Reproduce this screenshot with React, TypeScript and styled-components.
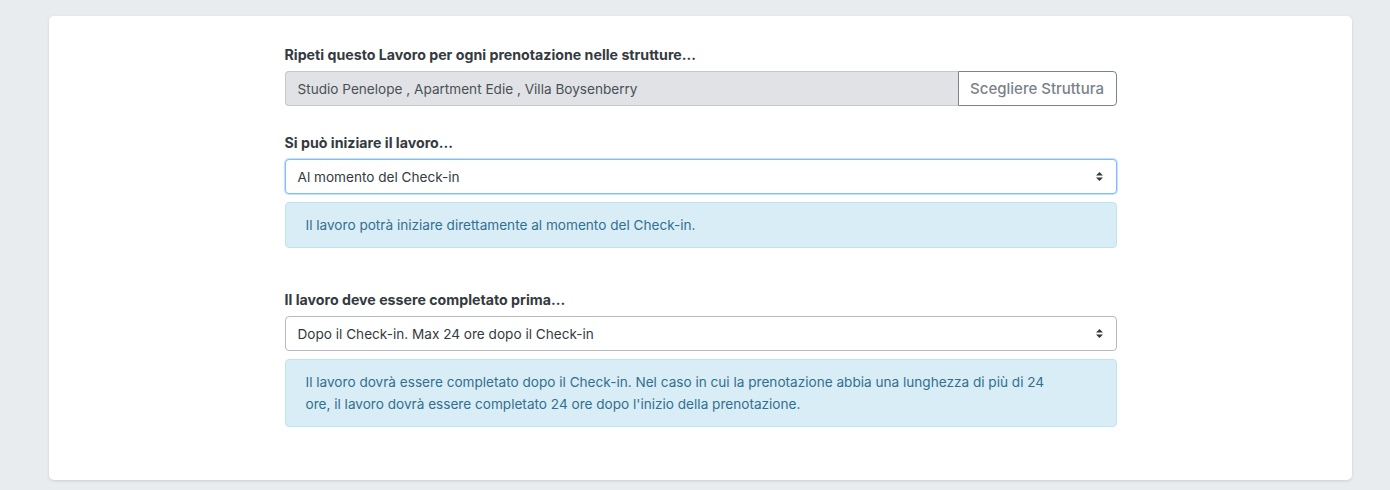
import React from "react";
import styled, { createGlobalStyle } from "styled-components";

const GlobalStyle = createGlobalStyle`
  * { box-sizing: border-box; }
  body {
    margin: 0;
    background: #e9ecef;
    font-family: Inter, "Noto Sans", "Liberation Sans", sans-serif;
    font-size: 14px;
    color: #495057;
  }
`;

const Page = styled.div`
  padding: 16px 38px 12px 49px;
`;

const Card = styled.div`
  background: #fff;
  border-radius: 5px;
  box-shadow: 0 1px 3px rgba(0, 0, 0, 0.12);
  padding: 28px 20px 53px;
`;

const Column = styled.div`
  max-width: 832px;
  margin: 0 auto;
`;

const Group = styled.div<{ $gap: number }>`
  margin-bottom: ${(p) => p.$gap}px;
`;

const Label = styled.div`
  font-weight: 700;
  color: #343a40;
  line-height: 21px;
  margin-bottom: 6px;
  font-size: 14.2px;
`;

const InputGroup = styled.div`
  display: flex;
  height: 35px;
`;

const ReadonlyInput = styled.div`
  flex: 1;
  background: #e0e2e5;
  border: 1px solid #c4c8cc;
  border-right: none;
  border-radius: 4px 0 0 4px;
  padding: 0 12px;
  display: flex;
  align-items: center;
  font-size: 13.6px;
  color: #495057;
`;

const OutlineButton = styled.button`
  flex: none;
  border: 1px solid #7b848c;
  background: #fff;
  color: #7a828a;
  border-radius: 0 4px 4px 0;
  padding: 0;
  font-family: inherit;
  font-size: 15px;
  font-weight: 500;
  white-space: nowrap;
  width: 159px;
`;

const Select = styled.div<{ $focus?: boolean }>`
  height: 35px;
  border: 1px solid ${(p) => (p.$focus ? "#80bdff" : "#b5babe")};
  box-shadow: ${(p) => (p.$focus ? "0 0 0 1px rgba(128,189,255,0.45)" : "none")};
  border-radius: 4px;
  background: #fff;
  padding: 0 12px;
  display: flex;
  align-items: center;
  justify-content: space-between;
  font-size: 13.6px;
  color: #343a40;
`;

const Alert = styled.div`
  margin-top: 8px;
  background: #d9edf6;
  border: 1px solid #bfe4ee;
  border-radius: 4px;
  padding: 11px 20px;
  line-height: 22px;
  color: #31708f;
  font-size: 13.6px;
`;

function Caret() {
  return (
    <svg width="9" height="11" viewBox="0 0 9 11">
      <path d="M4.5 1 L8 4.5 H1 Z M4.5 10 L8 6.5 H1 Z" fill="#343a40" />
    </svg>
  );
}

export default function App() {
  return (
    <>
      <GlobalStyle />
      <Page>
        <Card>
          <Column>
            <Group $gap={26}>
              <Label>Ripeti questo Lavoro per ogni prenotazione nelle strutture...</Label>
              <InputGroup>
                <ReadonlyInput>Studio Penelope , Apartment Edie , Villa Boysenberry</ReadonlyInput>
                <OutlineButton>Scegliere Struttura</OutlineButton>
              </InputGroup>
            </Group>
            <Group $gap={41}>
              <Label>Si può iniziare il lavoro...</Label>
              <Select $focus>
                <span>Al momento del Check-in</span>
                <Caret />
              </Select>
              <Alert>Il lavoro potrà iniziare direttamente al momento del Check-in.</Alert>
            </Group>
            <Group $gap={0}>
              <Label>Il lavoro deve essere completato prima...</Label>
              <Select>
                <span>Dopo il Check-in. Max 24 ore dopo il Check-in</span>
                <Caret />
              </Select>
              <Alert>
                Il lavoro dovrà essere completato dopo il Check-in. Nel caso in cui la prenotazione abbia una lunghezza di più di 24
                <br />
                ore, il lavoro dovrà essere completato 24 ore dopo l'inizio della prenotazione.
              </Alert>
            </Group>
          </Column>
        </Card>
      </Page>
    </>
  );
}
